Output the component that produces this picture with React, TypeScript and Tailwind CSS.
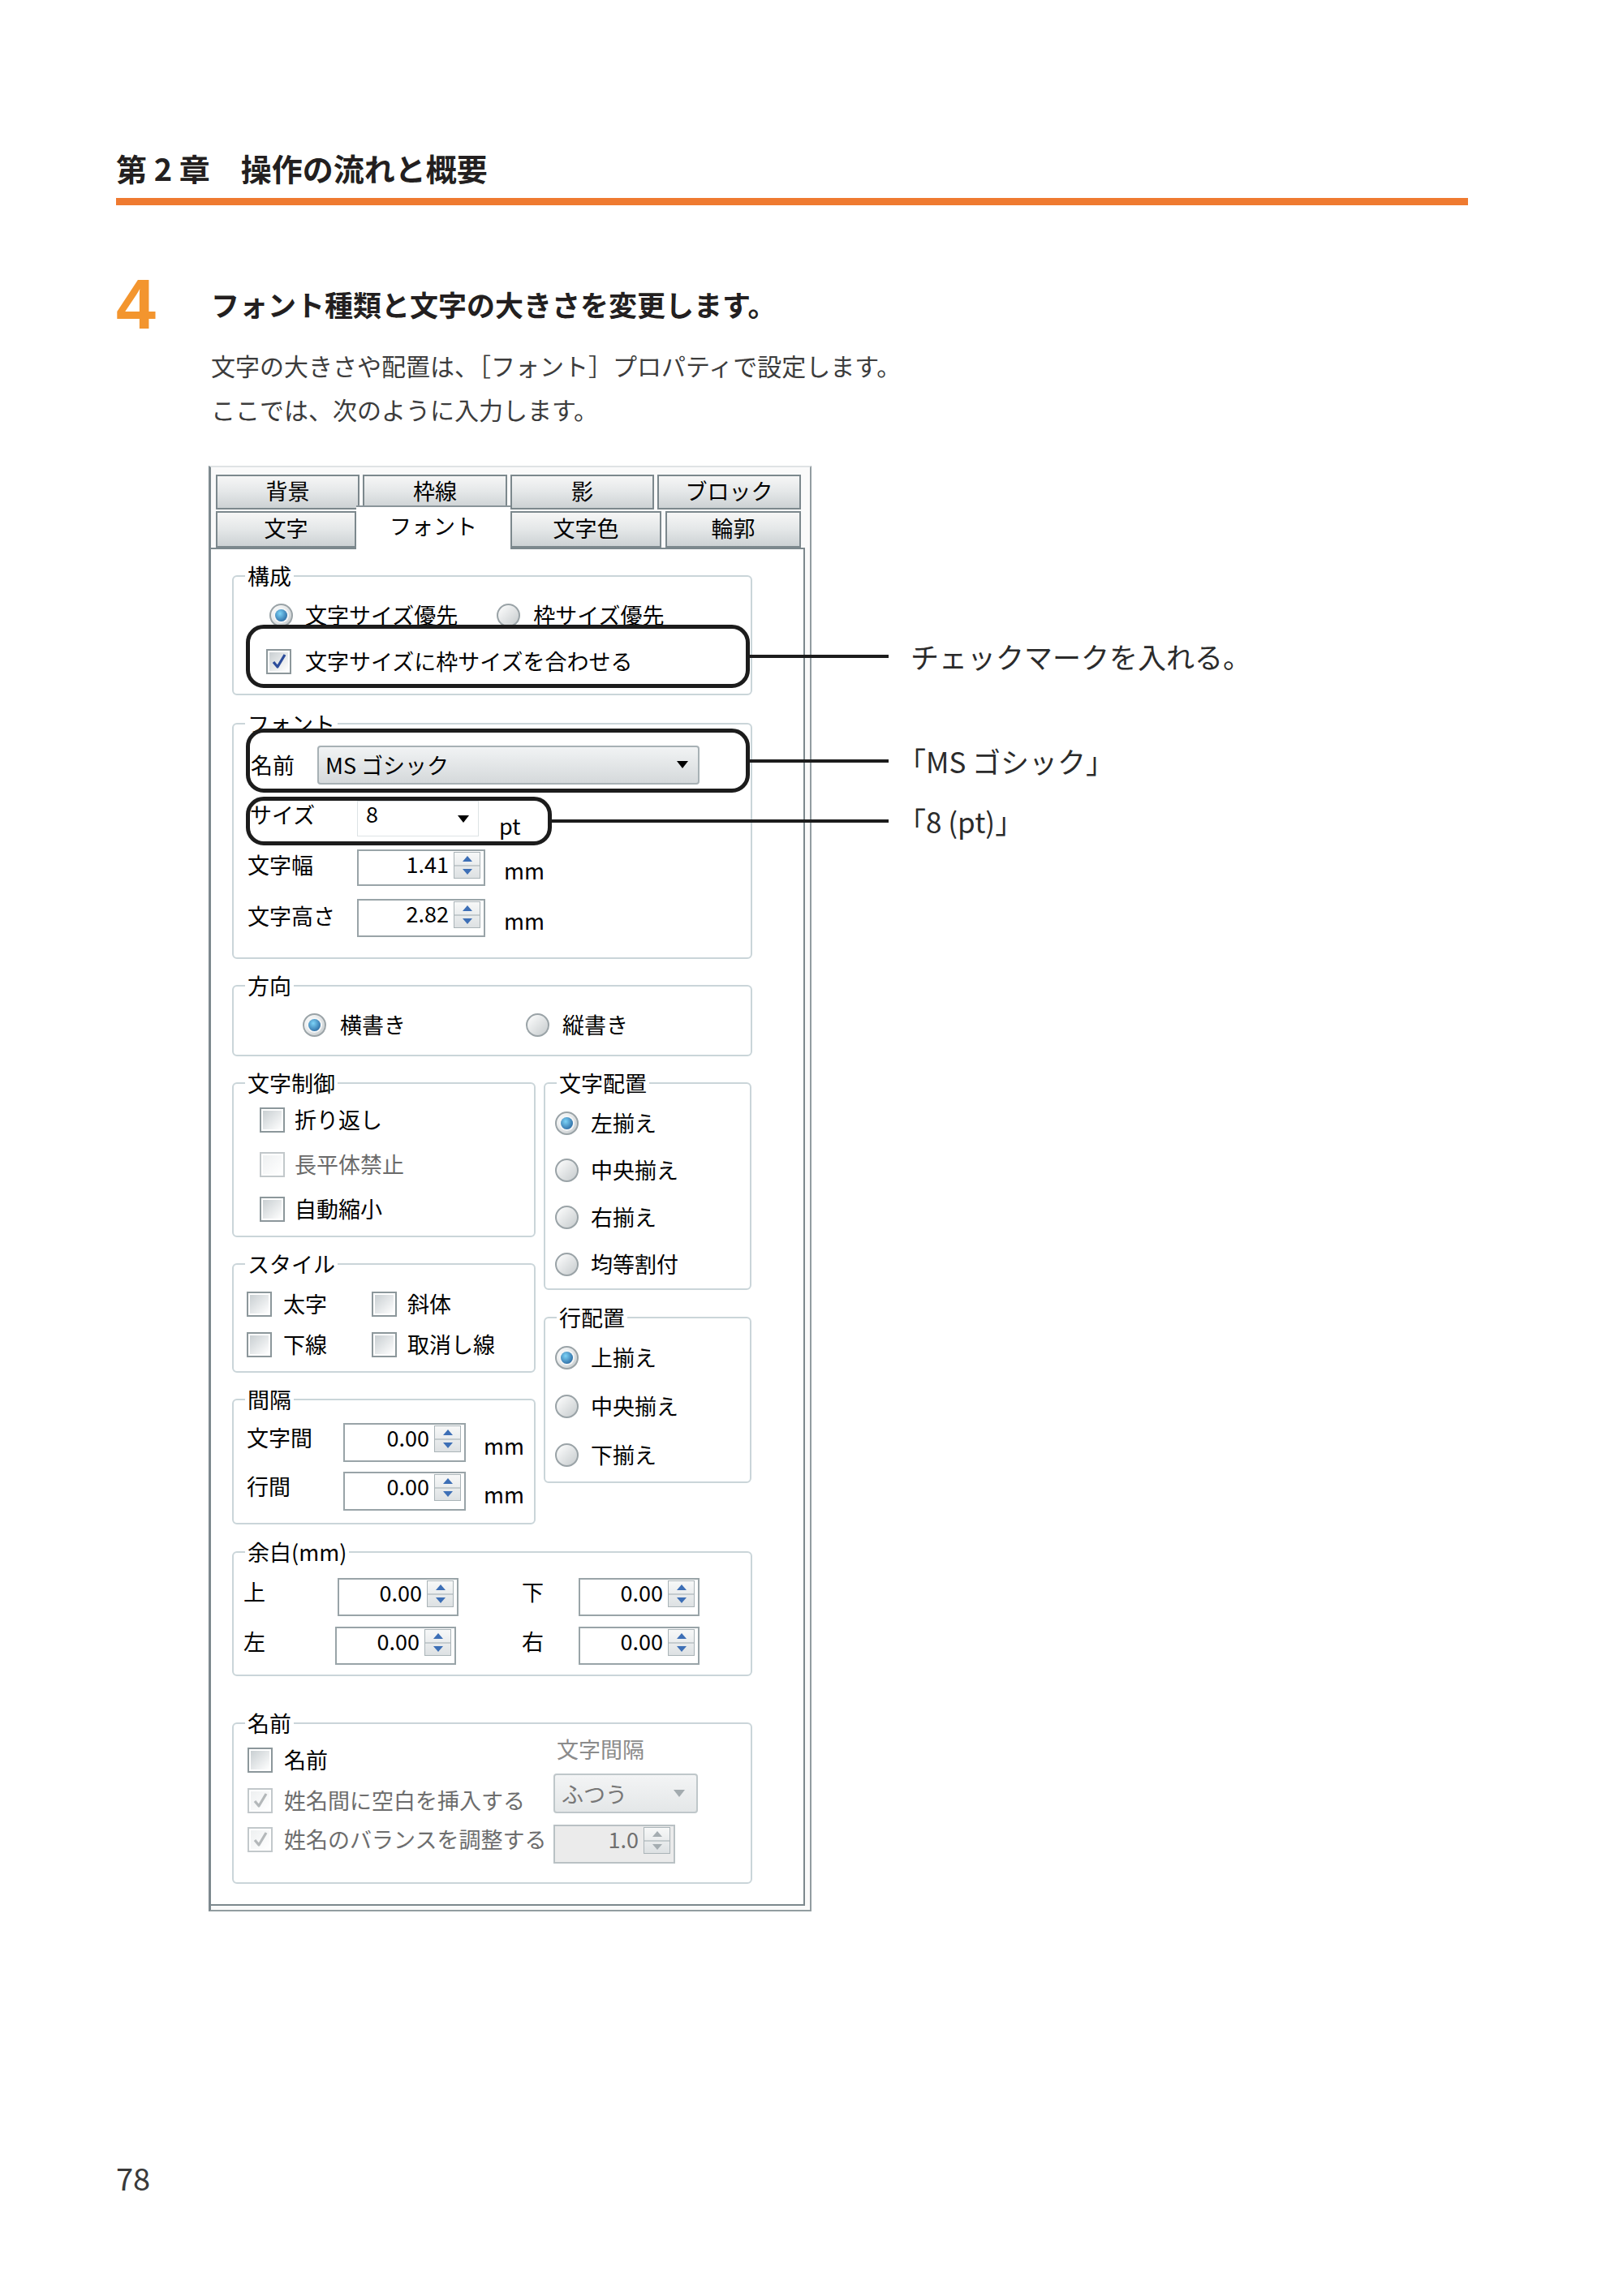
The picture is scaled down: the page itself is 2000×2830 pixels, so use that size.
import React from "react";

const JP = "font-['Noto_Sans_CJK_JP',sans-serif]";

function Radio({ checked = false }: { checked?: boolean }) {
  return (
    <span className="flex h-[29px] w-[29px] shrink-0 items-center justify-center rounded-full border-2 border-[#9aa3a7] bg-linear-to-br from-[#ffffff] to-[#c6cbcd]">
      {checked && (
        <span className="h-[15px] w-[15px] rounded-full bg-radial-[at_40%_35%] from-[#7dd3f7] to-[#17508e] ring-2 ring-[#f4f6f7]" />
      )}
    </span>
  );
}

function Check({ checked = false, disabled = false }: { checked?: boolean; disabled?: boolean }) {
  return (
    <span
      className={
        disabled
          ? "flex h-[31px] w-[31px] shrink-0 border-2 border-[#c2c8cb] bg-white p-[2px]"
          : "flex h-[31px] w-[31px] shrink-0 border-2 border-[#8c979b] bg-white p-[2px]"
      }
    >
      <span
        className={
          disabled
            ? "flex h-full w-full items-center justify-center bg-linear-to-br from-[#eef0f1] to-[#ffffff]"
            : "flex h-full w-full items-center justify-center bg-linear-to-br from-[#c9cfd2] to-[#ffffff]"
        }
      >
        {checked && (
          <svg width="20" height="20" viewBox="0 0 20 20">
            <path
              d="M3 11 L8 17 L17 2"
              fill="none"
              stroke={disabled ? "#b4b8ba" : "#2b4c9b"}
              strokeWidth="3.2"
              strokeLinejoin="round"
            />
          </svg>
        )}
      </span>
    </span>
  );
}

function Spin({ value, className, disabled = false }: { value: string; className: string; disabled?: boolean }) {
  return (
    <div
      className={`flex shrink-0 items-start border-2 ${
        disabled ? "border-[#b9c1c4] bg-[#ebebeb] text-[#6f6f6f]" : "border-[#99a4a8] bg-white"
      } ${className}`}
    >
      <span className="flex-1 pr-[6px] pt-[1px] text-right leading-[30px]">{value}</span>
      <span className="mr-[4px] mt-[1px] flex h-[33px] w-[33px] shrink-0 flex-col border border-[#aab4b8] bg-linear-to-b from-[#f7f8f8] to-[#dde1e3]">
        <span className="flex flex-1 items-center justify-center border-b-2 border-[#c4cbce]">
          <span
            className={
              disabled
                ? "h-0 w-0 border-x-[6px] border-b-[7px] border-x-transparent border-b-[#a5adb1]"
                : "h-0 w-0 border-x-[6px] border-b-[7px] border-x-transparent border-b-[#3d6fb6]"
            }
          />
        </span>
        <span className="flex flex-1 items-center justify-center">
          <span
            className={
              disabled
                ? "h-0 w-0 border-x-[6px] border-t-[7px] border-x-transparent border-t-[#a5adb1]"
                : "h-0 w-0 border-x-[6px] border-t-[7px] border-x-transparent border-t-[#3d6fb6]"
            }
          />
        </span>
      </span>
    </div>
  );
}

function Group({ label, className, children }: { label: string; className: string; children: React.ReactNode }) {
  return (
    <fieldset className={`shrink-0 rounded-[6px] border-2 border-[#cad5d9] ${className}`}>
      <legend className="ml-[14px] px-[3px] leading-[30px]">{label}</legend>
      {children}
    </fieldset>
  );
}

// annotation box drawn over the dialog, with its leader line and note
function Callout({
  className,
  lineClass,
  labelClass,
  label,
  children,
}: {
  className: string;
  lineClass: string;
  labelClass: string;
  label: string;
  children: React.ReactNode;
}) {
  return (
    <div className={`relative z-10 flex rounded-[22px] border-[5px] border-[#1c1c1c] bg-white ${className}`}>
      {children}
      <div className="absolute left-full top-1/2 flex -translate-y-1/2 items-center">
        <div className={`h-[4px] bg-[#1c1c1c] ${lineClass}`} />
        <span className={`whitespace-nowrap text-[35px] leading-[40px] text-[#2b2b2b] ${labelClass}`}>{label}</span>
      </div>
    </div>
  );
}

function Tab({ label, className }: { label: string; className: string }) {
  return (
    <div
      className={`flex shrink-0 items-center justify-center border-2 border-[#7c888d] bg-linear-to-b from-[#f6f6f6] via-[#e4e7e8] to-[#cdd2d4] pb-[3px] ${className}`}
    >
      {label}
    </div>
  );
}

function Dialog() {
  return (
    <div
      className={`-ml-[3px] h-[1782px] w-[743px] border-b-2 border-l-[3px] border-r-2 border-t-2 border-b-[#929da1] border-l-[#7d898e] border-r-[#929da1] border-t-[#dfe3e5] bg-[#fafafa] pb-[5px] pr-[6px] text-[27px] leading-[30px] text-black ${JP}`}
    >
      <div className="pl-[6px] pr-[5px] pt-[9px]">
        <div className="flex h-[43px] gap-[4px]">
          <Tab label="背景" className="w-[177px]" />
          <Tab label="枠線" className="w-[178px]" />
          <Tab label="影" className="w-[177px]" />
          <Tab label="ブロック" className="w-[177px]" />
        </div>
        <div className="relative z-10 -mt-[5px] flex h-[52px] items-end">
          <Tab label="文字" className="h-[45px] w-[173px]" />
          <div className="-mb-[2px] flex h-[54px] w-[190px] shrink-0 justify-center border-t-2 border-[#8a959a] bg-white pt-[8px]">
            フォント
          </div>
          <Tab label="文字色" className="h-[45px] w-[186px]" />
          <Tab label="輪郭" className="ml-[5px] h-[45px] w-[167px]" />
        </div>
      </div>

      <div className="h-[1674px] border-b-2 border-r-2 border-t-2 border-[#7c888d] bg-white pl-[26px] pt-[18px]">
        <Group label="構成" className="h-[162px] w-[641px]">
          <div className="mt-[18px] flex h-[30px] items-center pl-[44px]">
            <Radio checked />
            <span className="ml-[15px]">文字サイズ優先</span>
            <span className="ml-[48px] flex items-center">
              <Radio />
            </span>
            <span className="ml-[16px]">枠サイズ優先</span>
          </div>
          <Callout
            className="-mt-[3px] ml-[15px] h-[78px] w-[621px] items-center pl-[20px] pt-[12px]"
            lineClass="w-[176px]"
            labelClass="ml-[27px]"
            label="チェックマークを入れる。"
          >
            <Check checked />
            <span className="ml-[17px]">文字サイズに枠サイズを合わせる</span>
          </Callout>
        </Group>

        <Group label="フォント" className="mt-[20px] h-[305px] w-[641px]">
          <Callout
            className="-mt-[9px] ml-[15px] h-[79px] w-[621px] items-center pl-[1px] pt-[10px]"
            lineClass="w-[176px]"
            labelClass="ml-[11px]"
            label="「MS ゴシック」"
          >
            <span className="w-[82px] shrink-0">名前</span>
            <div className="flex h-[48px] w-[471px] shrink-0 items-center rounded-[4px] border-2 border-[#a7b1b5] bg-linear-to-b from-[#f1f3f4] to-[#d5d9db] pl-[8px] pr-[12px]">
              <span className="flex-1">MS ゴシック</span>
              <span className="h-0 w-0 border-x-[7px] border-t-[9px] border-x-transparent border-t-black" />
            </div>
          </Callout>
          <Callout
            className="ml-[15px] mt-[5px] h-[60px] w-[377px] items-start"
            lineClass="w-[420px]"
            labelClass="ml-[11px]"
            label="「8 (pt)」"
          >
            <span className="mt-[2px] w-[132px] shrink-0">サイズ</span>
            <div className="flex h-[44px] w-[150px] shrink-0 items-start border border-[#dde3e5] bg-white pl-[10px] pr-[11px]">
              <span className="flex-1 leading-[30px]">8</span>
              <span className="mt-[17px] h-0 w-0 border-x-[7px] border-t-[9px] border-x-transparent border-t-black" />
            </div>
            <span className="ml-[25px] mt-[16px]">pt</span>
          </Callout>
          <div className="mt-[5px] flex h-[45px] items-start pl-[17px]">
            <span className="mt-[4px] w-[135px] shrink-0">文字幅</span>
            <Spin value="1.41" className="h-[45px] w-[158px]" />
            <span className="ml-[23px] mt-[11px]">mm</span>
          </div>
          <div className="mt-[16px] flex h-[47px] items-start pl-[17px]">
            <span className="mt-[6px] w-[135px] shrink-0">文字高さ</span>
            <Spin value="2.82" className="h-[47px] w-[158px]" />
            <span className="ml-[23px] mt-[12px]">mm</span>
          </div>
        </Group>

        <Group label="方向" className="mt-[18px] h-[102px] w-[641px]">
          <div className="mt-[18px] flex h-[30px] items-center pl-[85px]">
            <span className="flex w-[275px] items-center">
              <Radio checked />
              <span className="ml-[17px]">横書き</span>
            </span>
            <Radio />
            <span className="ml-[16px]">縦書き</span>
          </div>
        </Group>

        <div className="mt-[18px] flex gap-[10px]">
          <div className="flex w-[374px] flex-col gap-[18px]">
            <Group label="文字制御" className="h-[205px] w-[374px]">
              <div className="mt-[15px] flex flex-col gap-[25px] pl-[32px]">
                <div className="flex h-[30px] items-center">
                  <Check />
                  <span className="ml-[12px]">折り返し</span>
                </div>
                <div className="flex h-[30px] items-center">
                  <Check disabled />
                  <span className="ml-[12px] text-[#6a6a6a]">長平体禁止</span>
                </div>
                <div className="flex h-[30px] items-center">
                  <Check />
                  <span className="ml-[12px]">自動縮小</span>
                </div>
              </div>
            </Group>
            <Group label="スタイル" className="h-[149px] w-[374px]">
              <div className="mt-[19px] grid grid-cols-[154px_1fr] gap-y-[20px] pl-[16px]">
                <div className="flex h-[30px] items-center">
                  <Check />
                  <span className="ml-[14px]">太字</span>
                </div>
                <div className="flex h-[30px] items-center">
                  <Check />
                  <span className="ml-[13px]">斜体</span>
                </div>
                <div className="flex h-[30px] items-center">
                  <Check />
                  <span className="ml-[14px]">下線</span>
                </div>
                <div className="flex h-[30px] items-center">
                  <Check />
                  <span className="ml-[13px]">取消し線</span>
                </div>
              </div>
            </Group>
            <Group label="間隔" className="h-[169px] w-[374px]">
              <div className="mt-[14px] flex h-[48px] items-start pl-[16px]">
                <span className="mt-[3px] w-[119px] shrink-0">文字間</span>
                <Spin value="0.00" className="h-[48px] w-[151px]" />
                <span className="ml-[22px] mt-[13px]">mm</span>
              </div>
              <div className="mt-[12px] flex h-[48px] items-start pl-[16px]">
                <span className="mt-[3px] w-[119px] shrink-0">行間</span>
                <Spin value="0.00" className="h-[48px] w-[151px]" />
                <span className="ml-[22px] mt-[13px]">mm</span>
              </div>
            </Group>
          </div>

          <div className="flex w-[256px] flex-col gap-[19px]">
            <Group label="文字配置" className="h-[270px] w-[256px]">
              <div className="mt-[19px] flex flex-col gap-[28px] pl-[12px]">
                {["左揃え", "中央揃え", "右揃え", "均等割付"].map((t, i) => (
                  <div key={t} className="flex h-[30px] items-center">
                    <Radio checked={i === 0} />
                    <span className="ml-[15px]">{t}</span>
                  </div>
                ))}
              </div>
            </Group>
            <Group label="行配置" className="h-[219px] w-[256px]">
              <div className="mt-[19px] flex flex-col gap-[30px] pl-[12px]">
                {["上揃え", "中央揃え", "下揃え"].map((t, i) => (
                  <div key={t} className="flex h-[30px] items-center">
                    <Radio checked={i === 0} />
                    <span className="ml-[15px]">{t}</span>
                  </div>
                ))}
              </div>
            </Group>
          </div>
        </div>

        <Group label="余白(mm)" className="mt-[19px] h-[168px] w-[641px]">
          <div className="mt-[17px] flex h-[47px] items-start pl-[12px]">
            <span className="mt-[2px] w-[116px] shrink-0">上</span>
            <Spin value="0.00" className="h-[47px] w-[149px]" />
            <span className="ml-[78px] mt-[2px] w-[70px] shrink-0">下</span>
            <Spin value="0.00" className="h-[47px] w-[149px]" />
          </div>
          <div className="mt-[13px] flex h-[47px] items-start pl-[12px]">
            <span className="mt-[3px] w-[113px] shrink-0">左</span>
            <Spin value="0.00" className="h-[47px] w-[149px]" />
            <span className="ml-[81px] mt-[3px] w-[70px] shrink-0">右</span>
            <Spin value="0.00" className="h-[47px] w-[149px]" />
          </div>
        </Group>

        <Group label="名前" className="mt-[43px] h-[213px] w-[641px]">
          <div className="flex pl-[17px]">
            <div className="flex w-[377px] shrink-0 flex-col pt-[15px]">
              <div className="flex h-[30px] items-center">
                <Check />
                <span className="ml-[14px]">名前</span>
              </div>
              <div className="mt-[20px] flex h-[30px] items-center">
                <Check checked disabled />
                <span className="ml-[14px] text-[#6d6d6d]">姓名間に空白を挿入する</span>
              </div>
              <div className="mt-[18px] flex h-[30px] items-center">
                <Check checked disabled />
                <span className="ml-[14px] text-[#6d6d6d]">姓名のバランスを調整する</span>
              </div>
            </div>
            <div className="flex flex-col">
              <span className="mt-[2px] pl-[4px] text-[#8b8b8b]">文字間隔</span>
              <div className="mt-[15px] flex h-[49px] w-[178px] items-center rounded-[4px] border-2 border-[#bfc7ca] bg-linear-to-b from-[#f3f4f5] to-[#e4e7e8] pl-[8px] pr-[14px] text-[#777777]">
                <span className="flex-1">ふつう</span>
                <span className="h-0 w-0 border-x-[7px] border-t-[9px] border-x-transparent border-t-[#a3abaf]" />
              </div>
              <Spin value="1.0" disabled className="mt-[14px] h-[48px] w-[150px]" />
            </div>
          </div>
        </Group>
      </div>
    </div>
  );
}

export default function App() {
  return (
    <div className={`relative h-[2830px] w-[2000px] overflow-hidden bg-white pl-[143px] pt-[184px] ${JP}`}>
      <h1 className="text-[38px] font-bold leading-[46px] text-[#231f20]">第 2 章　操作の流れと概要</h1>
      <div className="mt-[14px] h-[9px] w-[1666px] bg-[#ef7a30]" />

      <div className="mt-[78px] flex">
        <div className="w-[117px] shrink-0 font-['Liberation_Sans',sans-serif] text-[88px] font-bold leading-[88px] text-[#f3952e]">
          4
        </div>
        <div className="flex-1">
          <h2 className="mt-[22px] text-[35px] font-bold leading-[44px] text-[#231f20]">
            フォント種類と文字の大きさを変更します。
          </h2>
          <p className="mt-[26px] text-[30px] leading-[54px] text-[#3c3c3c]">
            文字の大きさや配置は、［フォント］プロパティで設定します。
            <br />
            ここでは、次のように入力します。
          </p>
          <div className="mt-[43px]">
            <Dialog />
          </div>
        </div>
      </div>

      <div className="mt-[305px] text-[38px] leading-[46px] text-[#3a3a3a]">78</div>
    </div>
  );
}
